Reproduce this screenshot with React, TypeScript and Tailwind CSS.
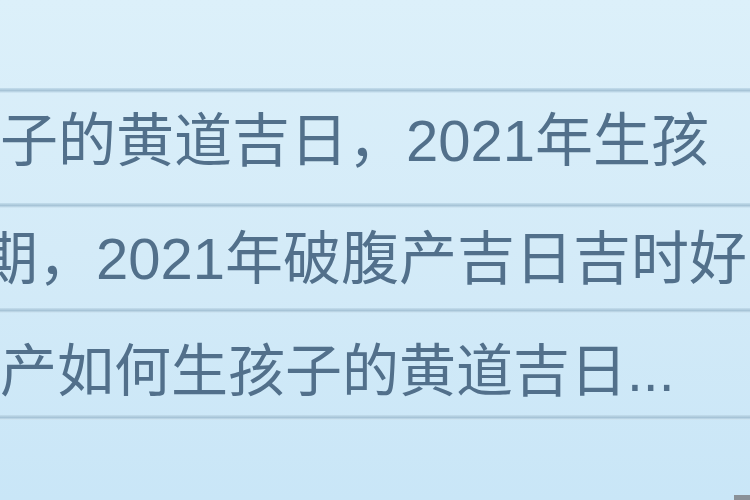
const ROWS = [
  { text: '子的黄道吉日，2021年生孩', box: 'h-[110px] pb-[14px] text-[58px]', shift: 'ml-[0px]' },
  { text: '期，2021年破腹产吉日吉时好', box: 'h-[100px] pt-[2px] text-[58px]', shift: '-ml-[20px]' },
  { text: '产如何生孩子的黄道吉日...', box: 'h-[102px] pt-[14px] text-[57px]', shift: 'ml-[0px]' },
]

function Divider() {
  return <div className="h-[5px] w-full bg-gradient-to-b from-[#c4deed] via-[#a7c4d7] to-[#d6ecf8]" />
}

export default function App() {
  return (
    <div className="relative w-[750px] h-[500px] overflow-hidden bg-gradient-to-b from-[#dcf0fa] via-[#d4ebf8] to-[#c9e6f7]">
      <div className="h-[88px]" />
      <Divider />
      {ROWS.map((row) => (
        <div key={row.text}>
          <div className={`${row.box} flex items-center overflow-hidden`}>
            <p
              className={`${row.shift} whitespace-nowrap leading-none text-[#52708b] font-['Liberation_Sans','Noto_Sans_CJK_SC',sans-serif]`}
            >
              {row.text}
            </p>
          </div>
          <Divider />
        </div>
      ))}
      <div className="absolute bottom-0 right-0 h-[5px] w-[16px] bg-[#8a9198]" />
    </div>
  )
}
